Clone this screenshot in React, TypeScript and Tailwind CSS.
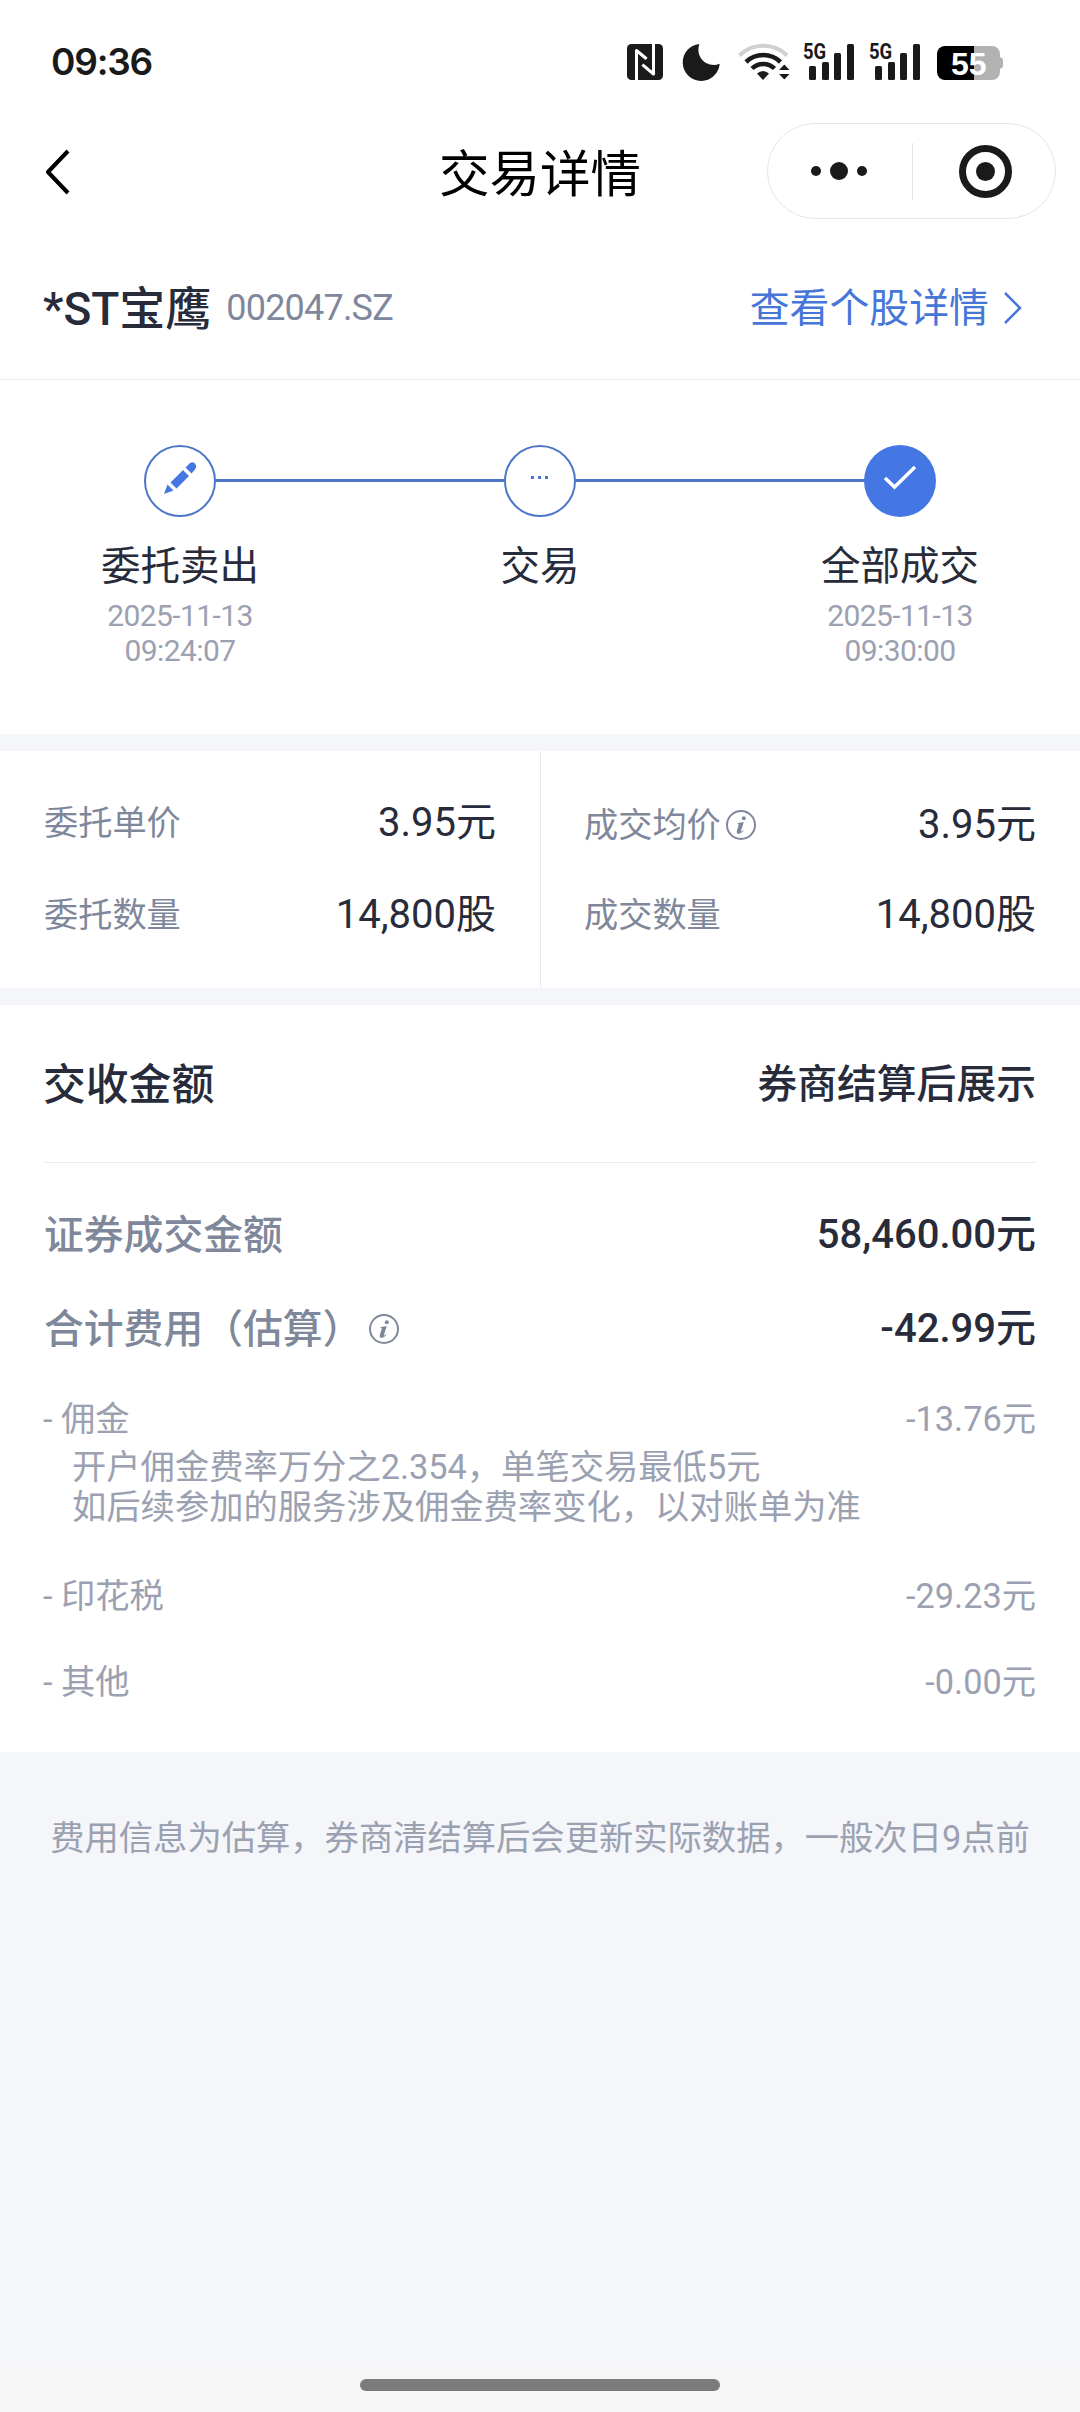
import type { ReactNode } from "react";

function Signal() {
  return (
    <div className="relative h-[38px] w-[52px]">
      <span className="absolute -top-[2px] left-0 origin-left scale-x-[0.84] font-[Roboto,sans-serif] text-[22px] leading-[22px] font-bold text-[#1a1a1a]">
        5G
      </span>
      <svg className="absolute inset-0" width="52" height="38" viewBox="0 0 52 38" fill="#1a1a1a">
        <rect x="6" y="23" width="7" height="14" rx="1.5" />
        <rect x="19" y="19" width="7" height="18" rx="1.5" />
        <rect x="31" y="10" width="7" height="27" rx="1.5" />
        <rect x="44" y="1" width="7" height="36" rx="1.5" />
      </svg>
    </div>
  );
}

function StatusBar() {
  return (
    <div className="flex h-[117px] items-start justify-between pt-[43px] pr-[76px] pl-[51px]">
      <span className="font-[Inter,sans-serif] text-[37px] leading-[37px] font-semibold tracking-[-1.2px] text-[#1a1a1a]">
        09:36
      </span>
      <div className="flex items-start">
        <svg width="38" height="38" viewBox="0 0 38 38">
          <rect x="1" y="1" width="36" height="36" rx="4.500" fill="#1a1a1a" />
          <path d="M10.500 37V7.500L19.500 15M27.500 1V31L17.500 22.500" fill="none" stroke="#fff" strokeWidth="3" strokeLinejoin="round" strokeLinecap="square" />
        </svg>
        <svg className="ml-[18px]" width="38" height="39" viewBox="0 0 38 39">
          <path d="M17.300 1A18.500 18.500 0 1 0 37.700 20.800Q31 23.500 24 20C17 16 15 8 17.300 1Z" fill="#1a1a1a" />
        </svg>
        <svg className="ml-[18px]" width="52" height="38" viewBox="0 0 52 38" fill="none">
          <path d="M1.500 12.500A34 34 0 0 1 49 12.500" stroke="#d0d0d0" strokeWidth="4" />
          <path d="M8 19A25 25 0 0 1 42.500 19" stroke="#1a1a1a" strokeWidth="4.500" />
          <path d="M14 25.500A16 16 0 0 1 36.500 25.500" stroke="#1a1a1a" strokeWidth="4.500" />
          <path d="M19 30.500Q25 25.500 31 30.500L25 37Z" fill="#1a1a1a" />
          <path d="M41 27L46.300 21.500L51.500 27ZM41 31L46.300 36.500L51.500 31Z" fill="#1a1a1a" />
        </svg>
        <div className="ml-[13px]">
          <Signal />
        </div>
        <div className="ml-[14px]">
          <Signal />
        </div>
        <div className="relative mt-[3px] ml-[16px] h-[34px] w-[67px]">
          <svg width="67" height="34" viewBox="0 0 67 34">
            <path d="M37 0H55A8 8 0 0 1 63 8V11Q66 12 66 14V20Q66 22 63 23V26A8 8 0 0 1 55 34H37Z" fill="#b2b2b2" />
            <path d="M37 0H8A8 8 0 0 0 0 8V26A8 8 0 0 0 8 34H37Z" fill="#000" />
          </svg>
          <span className="absolute top-[2px] left-[14px] font-['Liberation_Sans',sans-serif] text-[32px] leading-[32px] font-bold text-white">
            55
          </span>
        </div>
      </div>
    </div>
  );
}

function NavBar() {
  return (
    <div className="grid h-[108px] grid-cols-[1fr_auto_1fr] items-center pr-[24px] pl-[44px]">
      <svg width="28" height="48" viewBox="0 0 28 48" className="mt-[1px]">
        <path d="M24 3L4 24L24 45" fill="none" stroke="#000" strokeWidth="4" strokeLinejoin="round" />
      </svg>
      <h1 className="pt-[8px] pr-[20px] text-[50.5px] leading-[56px] text-black">交易详情</h1>
      <div className="flex h-[96px] w-[289px] items-center justify-self-end rounded-full border border-[#e5e5e5]">
        <div className="flex flex-1 items-center justify-center gap-[9px] pr-[2px]">
          <i className="size-[10px] rounded-full bg-[#1a1a1a]" />
          <i className="size-[18px] rounded-full bg-[#1a1a1a]" />
          <i className="size-[10px] rounded-full bg-[#1a1a1a]" />
        </div>
        <div className="h-[57px] w-px bg-[#e5e5e5]" />
        <div className="flex flex-1 justify-center">
          <div className="mr-[-3px] flex size-[53px] items-center justify-center rounded-full border-[7px] border-[#1a1a1a]">
            <i className="size-[19px] rounded-full bg-[#1a1a1a]" />
          </div>
        </div>
      </div>
    </div>
  );
}

function InfoIcon({ className = "" }: { className?: string }) {
  return (
    <svg className={className} width="30" height="30" viewBox="0 0 30 30">
      <circle cx="15" cy="15" r="14" fill="none" stroke="#7f889b" strokeWidth="2" />
      <circle cx="17.800" cy="8.300" r="2" fill="#7f889b" />
      <path
        d="M11 13.200L17.800 12L14.900 21.300Q15 22.200 18.300 19.500Q15.200 24 12.300 23.900Q10.100 23.500 10.900 20.800L12.800 14.300Z"
        fill="#7f889b"
      />
    </svg>
  );
}

interface StepProps {
  icon: ReactNode;
  label: string;
  date?: string;
  time?: string;
  done?: boolean;
}

function Step({ icon, label, date, time, done }: StepProps) {
  return (
    <div className="relative flex w-[180px] flex-col items-center">
      <div
        className={
          done
            ? "flex size-[72px] items-center justify-center rounded-full bg-[#4476e4]"
            : "flex size-[72px] items-center justify-center rounded-full border-2 border-[#4c77c8] bg-white"
        }
      >
        {icon}
      </div>
      <div className="mt-[26px] text-[39.5px] leading-[48px] whitespace-nowrap text-[#272b3a]">{label}</div>
      <div className="mt-[7px] text-center text-[30px] leading-[35px] tracking-[-0.6px] text-[#9ba1b1]">
        <div>{date}</div>
        <div>{time}</div>
      </div>
    </div>
  );
}

function Row({ label, value, info }: { label: string; value: string; info?: boolean }) {
  return (
    <div className="flex h-[48px] items-center justify-between">
      <span className="flex items-center pt-[2px] text-[34.2px] text-[#7f889b]">
        {label}
        {info && <InfoIcon className="mb-[2px] ml-[5px]" />}
      </span>
      <span className="text-[40px] text-[#272b3a]">{value}</span>
    </div>
  );
}

function FeeRow({ label, value }: { label: string; value: string }) {
  return (
    <div className="flex h-[40px] items-center justify-between text-[34.3px] text-[#9ba1b1]">
      <span className="-ml-px">- {label}</span>
      <span>{value}</span>
    </div>
  );
}

export default function App() {
  return (
    <div className="flex h-[2412px] w-[1080px] flex-col overflow-hidden bg-[#f4f6fa] font-[Roboto,'Noto_Sans_CJK_SC',sans-serif]">
      <div className="bg-white">
        <StatusBar />
        <NavBar />
        <div className="flex h-[155px] items-center justify-between border-b border-[#ebebeb] pt-[14px] pr-[57px] pl-[43px]">
          <div className="flex items-center">
            <span className="text-[46px] font-medium text-[#272b3a]">*ST宝鹰</span>
            <span className="mb-[3px] ml-[15px] text-[36px] tracking-[-0.8px] text-[#7f889b]">002047.SZ</span>
          </div>
          <div className="flex items-center text-[39.9px] text-[#4676d8]">
            查看个股详情
            <svg className="mb-[2px] ml-[14px]" width="20" height="34" viewBox="0 0 20 34">
              <path d="M2 2L17 17L2 32" fill="none" stroke="#4676d8" strokeWidth="2.500" />
            </svg>
          </div>
        </div>

        <div className="relative flex h-[354px] justify-between px-[90px] pt-[65px]">
          <div className="absolute top-[99px] left-[180px] h-[3px] w-[720px] bg-[#4c77c8]" />
          <Step
            label="委托卖出"
            date="2025-11-13"
            time="09:24:07"
            icon={
              <svg className="mb-[7px]" width="34" height="34" viewBox="0 0 34 34" fill="#4476e4">
                <path d="M1 33L4.500 23.500L10.500 29.500ZM7.500 21.500L20 9L26 15L13.500 27.500ZM22.500 6.500L26 3Q29 0 32 2.500Q34.500 6 31.500 9L28.500 12.500Z" />
              </svg>
            }
          />
          <Step
            label="交易"
            icon={
              <svg className="mb-[7px]" width="20" height="4" viewBox="0 0 20 4" fill="#4c77c8">
                <rect x="1" width="3" height="3" />
                <rect x="8" width="3" height="3" />
                <rect x="15" width="3" height="3" />
              </svg>
            }
          />
          <Step
            done
            label="全部成交"
            date="2025-11-13"
            time="09:30:00"
            icon={
              <svg className="mb-[6px]" width="34" height="26" viewBox="0 0 34 26">
                <path d="M2 13L11.500 22L32 2" fill="none" stroke="#fff" strokeWidth="3.500" />
              </svg>
            }
          />
        </div>
      </div>

      <div className="mt-[17px] flex h-[237px] bg-white">
        <div className="flex w-[540px] flex-col gap-[44px] pt-[48px] pr-[44px] pl-[44px]">
          <Row label="委托单价" value="3.95元" />
          <Row label="委托数量" value="14,800股" />
        </div>
        <div className="flex w-[540px] flex-col gap-[42px] border-l border-[#ebebeb] pt-[50px] pr-[44px] pl-[43px]">
          <Row label="成交均价" value="3.95元" info />
          <Row label="成交数量" value="14,800股" />
        </div>
      </div>

      <div className="mt-[17px] h-[747px] bg-white px-[44px]">
        <div className="flex h-[158px] items-center justify-between border-b border-[#ebebeb] pt-[3px] font-medium text-[#272b3a]">
          <span className="-ml-px text-[42.8px]">交收金额</span>
          <span className="text-[39.8px]">券商结算后展示</span>
        </div>
        <div className="mt-[42px] flex h-[60px] items-center justify-between text-[40px] font-medium">
          <span className="pt-px text-[39.8px] text-[#7f889b]">证券成交金额</span>
          <span className="text-[#272b3a]">58,460.00元</span>
        </div>
        <div className="mt-[34px] flex h-[60px] items-center justify-between text-[40px] font-medium">
          <span className="flex items-center pt-px text-[39.8px] text-[#7f889b]">
            合计费用（估算）
            <InfoIcon className="mb-[2px] ml-[7px]" />
          </span>
          <span className="text-[#272b3a]">-42.99元</span>
        </div>
        <div className="mt-[41px]">
          <FeeRow label="佣金" value="-13.76元" />
        </div>
        <div className="mt-[7px] pl-[28px] text-[34.3px] leading-[40px] text-[#9ba1b1]">
          <div>开户佣金费率万分之2.354，单笔交易最低5元</div>
          <div>如后续参加的服务涉及佣金费率变化，以对账单为准</div>
        </div>
        <div className="mt-[50px]">
          <FeeRow label="印花税" value="-29.23元" />
        </div>
        <div className="mt-[46px]">
          <FeeRow label="其他" value="-0.00元" />
        </div>
      </div>

      <p className="mt-[62px] text-center text-[34.3px] leading-[48px] whitespace-nowrap text-[#9ba1b1]">
        费用信息为估算，券商清结算后会更新实际数据，一般次日9点前
      </p>

      <div className="mt-auto flex h-[47px] justify-center bg-[#f6f6f6] pt-[14px]">
        <div className="h-[12px] w-[360px] rounded-full bg-[#7b7b7b]" />
      </div>
    </div>
  );
}
